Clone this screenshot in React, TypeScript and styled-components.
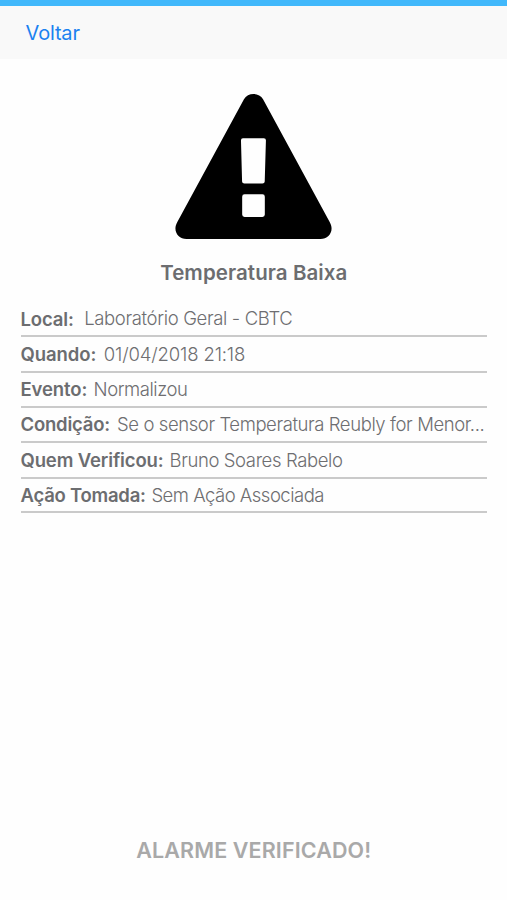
import React from "react";
import styled, { createGlobalStyle } from "styled-components";

const GlobalStyle = createGlobalStyle`
  * { box-sizing: border-box; }
  body { margin: 0; background: #fefefe; font-family: Inter, "Liberation Sans", sans-serif; }
`;

const Screen = styled.div`
  width: 507px;
  height: 900px;
  display: flex;
  flex-direction: column;
  overflow: hidden;
`;

const StatusStrip = styled.div`
  height: 6px;
  flex: none;
  background: #41b8fb;
`;

const NavBar = styled.header`
  height: 53px;
  flex: none;
  display: flex;
  align-items: center;
  padding: 0 25.6px;
  background: #f9f9f9;
`;

const BackButton = styled.button`
  border: 0;
  padding: 0;
  background: none;
  color: #1b82f0;
  font: 400 20px/24px Inter, "Liberation Sans", sans-serif;
  letter-spacing: -0.2px;
`;

const Content = styled.main`
  flex: 1;
  display: flex;
  flex-direction: column;
  padding: 34px 20px 0 20.5px;
`;

const WarningIcon = styled.svg`
  width: 157px;
  height: 147px;
  align-self: center;
  flex: none;
`;

const Title = styled.h1`
  margin: 20px 0 0;
  text-align: center;
  color: #6c6d70;
  font-size: 20.5px;
  line-height: 26px;
  font-weight: 600;
  letter-spacing: 0.08px;
`;

const Details = styled.dl`
  margin: 15px 0 0;
`;

const Row = styled.div<{ $height: number; $pad: number }>`
  height: ${(p) => p.$height}px;
  display: flex;
  align-items: flex-end;
  padding-bottom: ${(p) => p.$pad}px;
  border-bottom: 2px solid #cacaca;
  white-space: nowrap;
`;

const Label = styled.dt<{ $tracking: number }>`
  flex: none;
  color: #6c6d70;
  font-size: 18.5px;
  line-height: 24px;
  font-weight: 600;
  letter-spacing: ${(p) => p.$tracking}px;
`;

const Value = styled.dd<{ $gap: number; $tracking: number; $raise?: number }>`
  margin: 0 0 ${(p) => p.$raise ?? 0}px ${(p) => p.$gap}px;
  color: #6e6e71;
  font-size: 18.5px;
  line-height: 24px;
  font-weight: 300;
  letter-spacing: ${(p) => p.$tracking}px;
`;

const Footer = styled.footer`
  margin-top: auto;
  height: 65px;
  text-align: center;
  color: #a9a9a9;
  font-size: 21.5px;
  line-height: 30px;
  font-weight: 600;
  letter-spacing: 0.12px;
`;

const rows = [
  { label: "Local:", value: "Laboratório Geral - CBTC", height: 36, pad: 4, gap: 10.5, lt: -0.15, vt: -0.35, raise: 1 },
  { label: "Quando:", value: "01/04/2018 21:18", height: 36, pad: 5, gap: 7.3, lt: -0.05, vt: -0.14 },
  { label: "Evento:", value: "Normalizou", height: 35, pad: 5, gap: 6.3, lt: -0.1, vt: -0.45 },
  { label: "Condição:", value: "Se o sensor Temperatura Reubly for Menor...", height: 35, pad: 5, gap: 7, lt: -0.2, vt: -0.41 },
  { label: "Quem Verificou:", value: "Bruno Soares Rabelo", height: 36, pad: 5, gap: 6, lt: -0.13, vt: -0.39 },
  { label: "Ação Tomada:", value: "Sem Ação Associada", height: 34, pad: 4, gap: 5.7, lt: -0.24, vt: -0.5 },
];

export default function App() {
  return (
    <Screen>
      <GlobalStyle />
      <StatusStrip />
      <NavBar>
        <BackButton>Voltar</BackButton>
      </NavBar>
      <Content>
        <WarningIcon viewBox="0 0 158 147" preserveAspectRatio="none" aria-hidden="true">
          <path
            fill="#000"
            fillRule="evenodd"
            d="M69.4 6.2C73.2-.8 84.8-.8 88.6 6.2L155.8 129.2C160.6 137.8 155 146 146.4 146H11.6C3 146-2.6 137.8 2.2 129.2ZM68.4 45.3Q66.3 45.3 66.4 47.5L67.5 88.5Q67.6 90.5 69.8 90.5H88Q90.2 90.5 90.3 88.5L91.5 47.5Q91.6 45.3 89.4 45.3ZM70 101.3Q67.6 101.3 67.6 103.7V121.5Q67.6 123.9 70 123.9H88Q90.4 123.9 90.4 121.5V103.7Q90.4 101.3 88 101.3Z"
          />
        </WarningIcon>
        <Title>Temperatura Baixa</Title>
        <Details>
          {rows.map((r) => (
            <Row key={r.label} $height={r.height} $pad={r.pad}>
              <Label $tracking={r.lt}>{r.label}</Label>
              <Value $gap={r.gap} $tracking={r.vt} $raise={r.raise}>
                {r.value}
              </Value>
            </Row>
          ))}
        </Details>
        <Footer>ALARME VERIFICADO!</Footer>
      </Content>
    </Screen>
  );
}
